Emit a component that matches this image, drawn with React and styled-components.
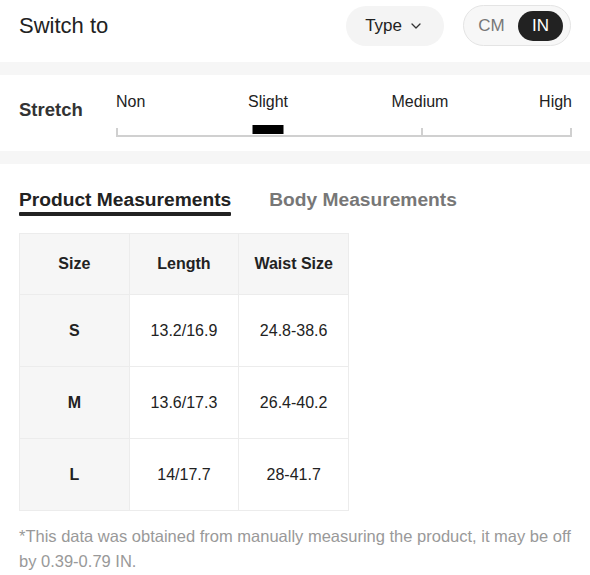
import styled, { createGlobalStyle } from "styled-components";

const GlobalStyle = createGlobalStyle`
  html, body {
    margin: 0;
    padding: 0;
    background: #fff;
  }
  body {
    font-family: "Liberation Sans", Arial, sans-serif;
    color: #222;
  }
`;

const Page = styled.div`
  width: 590px;
  background: #fff;
`;

const TopBar = styled.div`
  display: flex;
  justify-content: space-between;
  align-items: flex-start;
  height: 62px;
  box-sizing: border-box;
  padding: 5px 19px 0;
`;

const Title = styled.div`
  font-size: 22px;
  line-height: 41px;
  color: #222;
`;

const Controls = styled.div`
  display: flex;
  align-items: center;
  gap: 19px;
`;

const TypeButton = styled.button`
  display: flex;
  align-items: center;
  gap: 9px;
  height: 40px;
  padding: 0 23px 0 19px;
  border: none;
  border-radius: 20px;
  background: #f4f4f4;
  font-family: inherit;
  font-size: 17px;
  color: #222;
`;

const UnitToggle = styled.div`
  display: flex;
  align-items: center;
  gap: 4px;
  height: 41px;
  box-sizing: border-box;
  padding: 0 7px 0 5px;
  border: 1px solid #e4e4e4;
  border-radius: 21px;
  background: #f7f7f7;
`;

const Unit = styled.span`
  width: 45px;
  height: 30px;
  line-height: 30px;
  text-align: center;
  border-radius: 15px;
  font-size: 17px;
  background: ${(p) => (p.$active ? "#222" : "transparent")};
  color: ${(p) => (p.$active ? "#fff" : "#777")};
`;

const Divider = styled.div`
  height: 13px;
  background: #f6f6f6;
`;

const StretchRow = styled.div`
  display: flex;
  align-items: flex-start;
  height: 76px;
  box-sizing: border-box;
  padding: 17px 18px 0 19px;
`;

const StretchLabel = styled.div`
  width: 97px;
  margin-top: 7px;
  font-size: 18.5px;
  font-weight: 700;
  line-height: 22px;
  color: #333;
`;

const Scale = styled.div`
  flex: 1;
`;

const ScaleLabels = styled.div`
  position: relative;
  height: 19px;
`;

const ScaleLabel = styled.span`
  position: absolute;
  top: 0;
  font-size: 16px;
  line-height: 19px;
  color: #222;
  white-space: nowrap;
`;

const Track = styled.div`
  position: relative;
  height: 10px;
  margin-top: 14px;
  border-bottom: 2px solid #d0d0d0;
`;

const Tick = styled.span`
  position: absolute;
  bottom: 0;
  width: 2px;
  height: 7px;
  background: #d0d0d0;
`;

const Marker = styled.span`
  position: absolute;
  top: 0;
  width: 31px;
  height: 9px;
  background: #000;
  transform: translateX(-50%);
`;

const Tabs = styled.div`
  display: flex;
  gap: 38px;
  padding: 25px 19px 0;
`;

const Tab = styled.div`
  font-size: 19.2px;
  font-weight: 700;
  line-height: 22px;
  color: ${(p) => (p.$active ? "#222" : "#777")};

  &::after {
    content: "";
    display: block;
    height: 4px;
    margin-top: 1px;
    border-radius: 1px;
    background: ${(p) => (p.$active ? "#222" : "transparent")};
  }
`;

const Table = styled.table`
  margin: 17px 19px 0;
  border-collapse: collapse;
  table-layout: fixed;
  width: 330px;
`;

const Th = styled.th`
  height: 60px;
  padding: 0;
  border: 1px solid #ececec;
  background: #f6f6f6;
  font-size: 16px;
  font-weight: 700;
  color: #222;
`;

const Td = styled.td`
  height: 71px;
  padding: 0;
  border: 1px solid #ececec;
  text-align: center;
  font-size: 16px;
  font-weight: ${(p) => (p.$head ? 700 : 400)};
  background: ${(p) => (p.$head ? "#f6f6f6" : "#fff")};
  color: #222;
`;

const Note = styled.p`
  margin: 13px 0 0;
  padding: 0 19px 0;
  font-size: 16.5px;
  line-height: 25px;
  color: #999;
`;

const Chevron = () => (
  <svg width="10" height="6" viewBox="0 0 10 6" fill="none">
    <path d="M1 1l4 4 4-4" stroke="#333" strokeWidth="1.3" strokeLinecap="round" strokeLinejoin="round" />
  </svg>
);

const levels = [
  { name: "Non", pos: 0, align: "left" },
  { name: "Slight", pos: 1 / 3, align: "center" },
  { name: "Medium", pos: 2 / 3, align: "center" },
  { name: "High", pos: 1, align: "right" },
];

const rows = [
  ["S", "13.2/16.9", "24.8-38.6"],
  ["M", "13.6/17.3", "26.4-40.2"],
  ["L", "14/17.7", "28-41.7"],
];

const labelStyle = (l) => {
  if (l.align === "left") return { left: 0 };
  if (l.align === "right") return { right: 0 };
  return { left: `${l.pos * 100}%`, transform: "translateX(-50%)" };
};

const App = () => {
  const current = 1;
  return (
    <>
      <GlobalStyle />
      <Page>
        <TopBar>
          <Title>Switch to</Title>
          <Controls>
            <TypeButton>
              Type <Chevron />
            </TypeButton>
            <UnitToggle>
              <Unit>CM</Unit>
              <Unit $active>IN</Unit>
            </UnitToggle>
          </Controls>
        </TopBar>
        <Divider />
        <StretchRow>
          <StretchLabel>Stretch</StretchLabel>
          <Scale>
            <ScaleLabels>
              {levels.map((l) => (
                <ScaleLabel key={l.name} style={labelStyle(l)}>
                  {l.name}
                </ScaleLabel>
              ))}
            </ScaleLabels>
            <Track>
              <Tick style={{ left: 0 }} />
              <Tick style={{ left: "66.8%" }} />
              <Tick style={{ right: 0 }} />
              <Marker style={{ left: `${levels[current].pos * 100}%` }} />
            </Track>
          </Scale>
        </StretchRow>
        <Divider />
        <Tabs>
          <Tab $active>Product Measurements</Tab>
          <Tab>Body Measurements</Tab>
        </Tabs>
        <Table>
          <thead>
            <tr>
              <Th>Size</Th>
              <Th>Length</Th>
              <Th>Waist Size</Th>
            </tr>
          </thead>
          <tbody>
            {rows.map((r) => (
              <tr key={r[0]}>
                <Td $head>{r[0]}</Td>
                <Td>{r[1]}</Td>
                <Td>{r[2]}</Td>
              </tr>
            ))}
          </tbody>
        </Table>
        <Note>
          *This data was obtained from manually measuring the product, it may be off by 0.39-0.79 IN.
        </Note>
      </Page>
    </>
  );
};

export default App;
